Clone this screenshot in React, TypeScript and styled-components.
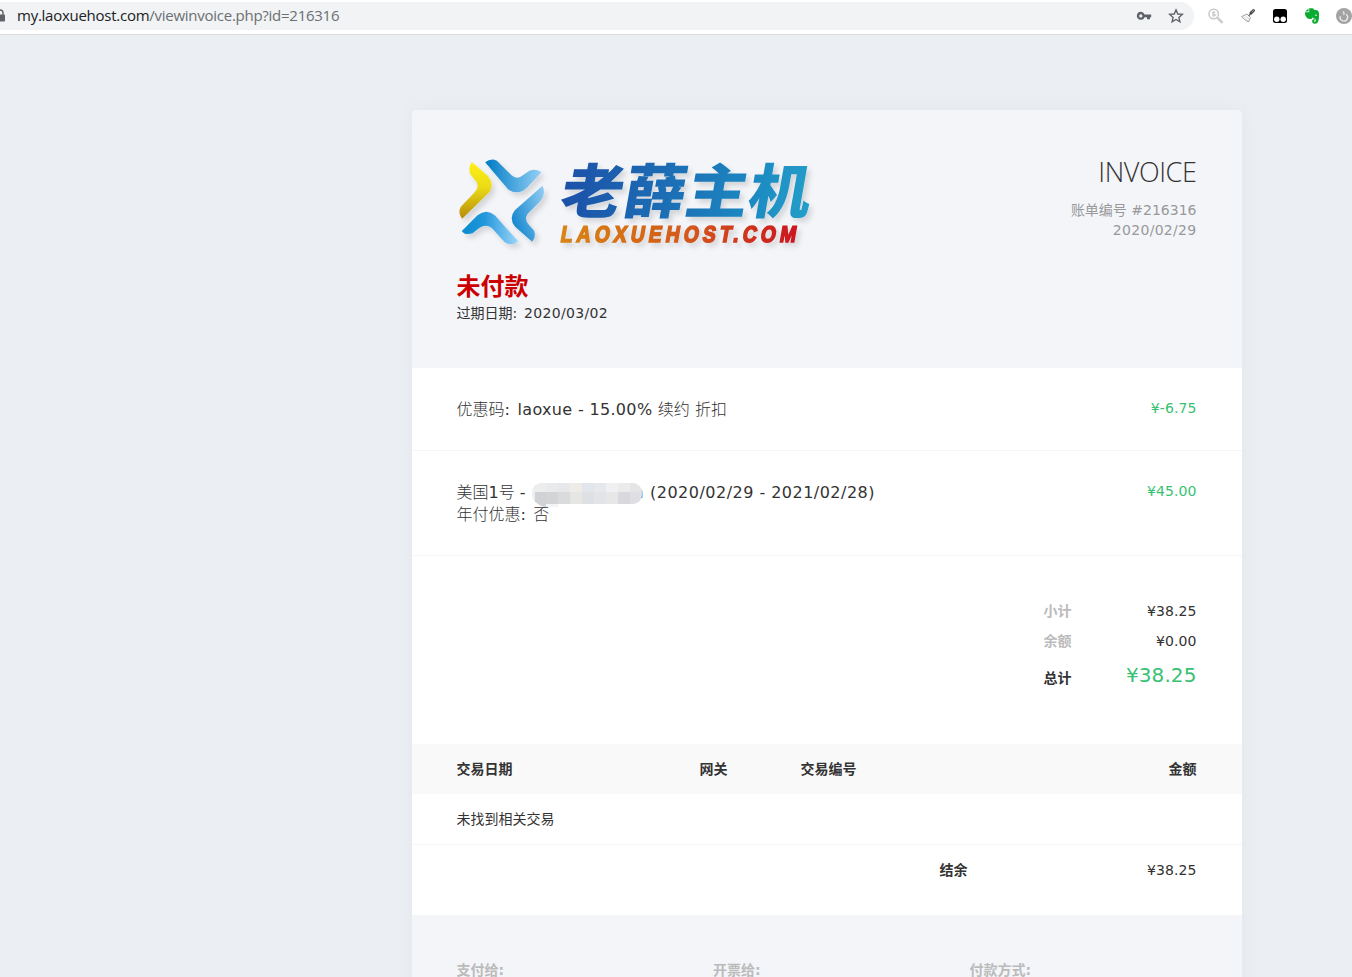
import React from 'react';
import styled, { createGlobalStyle } from 'styled-components';

const Global = createGlobalStyle`
  * { box-sizing: border-box; }
  body { margin: 0; background: #ebeff4; overflow: hidden; }
`;

const Page = styled.div`
  height: 977px;
  overflow: hidden;
  font: 14px/20px 'DejaVu Sans', 'Noto Sans CJK SC', sans-serif;
  color: #333;
`;

const Toolbar = styled.header`
  height: 35px;
  background: #fff;
  border-bottom: 1px solid #d9dcdf;
  display: flex;
  align-items: flex-start;
  padding-top: 2px;
`;

const AddressBar = styled.div`
  width: 1194px;
  height: 28px;
  border-radius: 0 14px 14px 0;
  background: #f1f3f4;
  display: flex;
  align-items: center;
  flex: none;
`;

const Url = styled.div`
  flex: 1;
  margin-left: 11px;
  font: 15px/26px 'Open Sans', sans-serif;
  letter-spacing: -0.26px;
  color: #6b6f73;
  white-space: nowrap;
  padding-bottom: 2px;
`;

const Host = styled.span`
  color: #202124;
`;

const BarIcons = styled.div`
  display: flex;
  gap: 16px;
  padding-right: 10px;
`;

const Extensions = styled.div`
  display: flex;
  gap: 16px;
  margin: 6px 0 0 14px;
  svg { flex: none; }
`;

const Card = styled.main`
  width: 830px;
  height: 1000px;
  margin: 75px 0 0 412px;
  background: #fff;
  border-radius: 5px;
  box-shadow: 0 0 20px rgba(0, 0, 0, 0.04);
  overflow: hidden;
`;

const Head = styled.section`
  height: 258px;
  background: #f3f5f9;
  padding: 45px 45.5px 0 44.5px;
  display: flex;
  justify-content: space-between;
`;

const LogoArt = styled.svg`
  display: block;
  overflow: visible;
`;

const Status = styled.div`
  margin-top: 25px;
  font-size: 24px;
  line-height: 24px;
  font-weight: 700;
  color: #c00;
`;

const Due = styled.div`
  margin-top: 4px;
`;

const Run = styled.span<{ $ls?: number; $light?: boolean; $before?: number }>`
  letter-spacing: ${(p) => p.$ls ?? 0}px;
  margin-left: ${(p) => p.$before ?? 0}px;
  font-weight: ${(p) => (p.$light ? 300 : 'inherit')};
`;

const Meta = styled.div`
  text-align: right;
  color: #999;
`;

const Title = styled.h1`
  margin: -1px 0 11px;
  font: 300 27px/35px 'Open Sans', sans-serif;
  letter-spacing: -0.4px;
  color: #333;
`;

const Item = styled.section<{ $height: number }>`
  height: ${(p) => p.$height}px;
  padding: 30px 45.5px 0 44.5px;
  border-bottom: 1px solid #f5f6f8;
  display: flex;
  justify-content: space-between;
`;

const Description = styled.div`
  padding-top: 1px;
  font-size: 16px;
  line-height: 22px;
  white-space: nowrap;
`;

const Price = styled.div`
  color: #38c172;
  letter-spacing: 0.1px;
`;

const Redacted = styled.span`
  display: inline-block;
  position: relative;
  width: 112px;
  text-align: right;
  margin: 0 6.5px 0 6px;
  color: #536ca0;
`;

const Mosaic = styled.svg`
  position: absolute;
  left: 0;
  top: 0;
`;

const Totals = styled.section`
  height: 188px;
  padding: 45px 45.5px 0 0;
`;

const TotalRow = styled.div<{ $grand?: boolean }>`
  display: grid;
  grid-template-columns: 28px 125px;
  justify-content: end;
  align-items: ${(p) => (p.$grand ? 'end' : 'center')};
  height: ${(p) => (p.$grand ? 27 : 20)}px;
  margin-bottom: ${(p) => (p.$grand ? 0 : 10)}px;
`;

const Label = styled.span<{ $dark?: boolean }>`
  font-weight: 700;
  color: ${(p) => (p.$dark ? '#333' : '#bbb')};
  white-space: nowrap;
`;

const Amount = styled.span<{ $grand?: boolean }>`
  text-align: right;
  font-size: ${(p) => (p.$grand ? 20 : 14)}px;
  line-height: ${(p) => (p.$grand ? 25 : 20)}px;
  letter-spacing: 0.1px;
  color: ${(p) => (p.$grand ? '#38c172' : '#333')};
`;

const Row = styled.div<{ $head?: boolean; $height: number }>`
  display: grid;
  grid-template-columns: 243px 101px 139px 1fr;
  height: ${(p) => p.$height}px;
  padding: 15px 45.5px 0 44.5px;
  background: ${(p) => (p.$head ? '#f9f9f9' : '#fff')};
  font-weight: ${(p) => (p.$head ? 700 : 400)};
  border-bottom: ${(p) => (p.$head ? 0 : 1)}px solid #f5f6f8;
  > :last-child:not(:first-child) { text-align: right; }
`;

const Balance = styled.div`
  display: flex;
  justify-content: space-between;
  height: 70px;
  padding: 15px 45.5px 0 527.5px;
`;

const Foot = styled.section`
  height: 200px;
  background: #f3f5f9;
  padding: 45px 45px 0 44.5px;
  display: grid;
  grid-template-columns: 256.5px 256.5px 1fr;
`;

const Logo = () => (
  <LogoArt width="356" height="95" viewBox="52.5 45 1068 285">
    <defs>
      <linearGradient id="gy" x2="0" y2="1"><stop stopColor="#fff012" /><stop offset=".45" stopColor="#eadb15" /><stop offset="1" stopColor="#b88a0c" /></linearGradient>
      <linearGradient id="gt"><stop stopColor="#007bc4" /><stop offset="1" stopColor="#94d0f6" /></linearGradient>
      <linearGradient id="gr" x1="1" x2="0" y2=".6"><stop stopColor="#94cdf4" /><stop offset="1" stopColor="#1688ce" /></linearGradient>
      <linearGradient id="gb"><stop stopColor="#078bd0" /><stop offset=".4" stopColor="#2397db" /><stop offset="1" stopColor="#9cd5f9" /></linearGradient>
      <linearGradient id="gn" gradientUnits="userSpaceOnUse" x1="365" x2="1110"><stop stopColor="#1d52a8" /><stop offset=".5" stopColor="#1a74b8" /><stop offset="1" stopColor="#229fca" /></linearGradient>
      <linearGradient id="gh" gradientUnits="userSpaceOnUse" x1="0" x2="840"><stop stopColor="#d88514" /><stop offset=".55" stopColor="#d3561b" /><stop offset="1" stopColor="#cb1420" /></linearGradient>
      <filter id="sh" x="-10%" y="-10%" width="125%" height="125%"><feDropShadow dx="10" dy="12" stdDeviation="8" floodColor="#000" floodOpacity=".13" /></filter>
    </defs>
    <g filter="url(#sh)">
      <path fill="url(#gy)" d="M97 66L146 109Q165 135 149 157L68 236Q54 217 64 200L104 158Q119 145 112 127L92 102Q86 82 97 66Z" />
      <path fill="url(#gt)" d="M137 67Q155 53 172 62L216 106Q232 120 248 107L270 92Q292 84 306 97L262 143Q237 167 207 149Z" />
      <path fill="url(#gr)" d="M309 137Q321 162 300 186L264 222Q253 239 268 254L284 272Q290 290 278 305L227 260Q206 236 226 211Z" />
      <path fill="url(#gb)" d="M67 273L114 226Q141 205 166 226L236 304Q215 321 195 306L157 264Q140 251 120 263L99 280Q74 287 67 273Z" />
      <text transform="translate(40 14) skewX(-10) scale(1 .95)" x="352" y="216" textLength="750" lengthAdjust="spacingAndGlyphs" fontFamily="'Noto Sans CJK SC', sans-serif" fontWeight="800" fontSize="186" fill="url(#gn)">老薛主机</text>
      <text transform="translate(361 307) skewX(-10) scale(.85 1)" x="0" y="0" textLength="830" fontFamily="'Liberation Sans', sans-serif" fontWeight="700" fontSize="68" fill="url(#gh)" stroke="url(#gh)" strokeWidth="5">LAOXUEHOST.COM</text>
    </g>
  </LogoArt>
);

const topCells = ['#eceded', '#e9eaeb', '#e7e8ea', '#efebe6', '#e1e6ec', '#e7e8ec', '#eff0f1', '#ebebec', '#e5e5e8'];
const midCells = ['#d1d2d5', '#d3d4d6', '#dadbdd', '#e6e6e2', '#dde1e4', '#e3e4e8', '#e7e7e8', '#d9d9dd', '#dedee3'];

const Redaction = () => (
  <Mosaic width="112" height="29" viewBox="0 0 112 29">
    <defs><clipPath id="mc"><rect x="0" y="1" width="110" height="21" rx="9" /></clipPath></defs>
    <g clipPath="url(#mc)">
      {topCells.map((c, i) => <rect key={c} x={i * 12 + 2} y="0" width="14" height="10" fill={c} />)}
      {midCells.map((c, i) => <rect key={c} x={i * 12 + 2} y="10" width="14" height="12" fill={c} />)}
      <rect width="3" height="23" fill="#eeeeef" />
    </g>
    <path d="M3 19H14V25Q8 25 3 19Z" fill="#d1d2d5" />
    <path d="M14 22H26V25H14Z" fill="#f4f4f4" />
  </Mosaic>
);

export default function App() {
  return (
    <Page>
      <Global />
      <Toolbar>
        <AddressBar>
          <svg width="6" height="14" viewBox="0 0 6 14"><path d="M-3 6V4a3 3 0 0 1 6 0v2" fill="none" stroke="#5f6368" strokeWidth="1.4" /><rect x="-5" y="5.5" width="10" height="7" rx="1" fill="#5f6368" /></svg>
          <Url><Host>my.laoxuehost.com</Host>/viewinvoice.php?id=216316</Url>
          <BarIcons>
            <svg width="16" height="16" viewBox="0 0 16 16"><path fillRule="evenodd" fill="#5f6368" d="M4.8 3.8a4 4 0 1 0 3.8 5.4H11v2.1h3V9.2h1.2V6.5H8.6A4 4 0 0 0 4.8 3.8Zm0 2.5a1.6 1.6 0 1 1 0 3.2 1.6 1.6 0 0 1 0-3.2Z" /></svg>
            <svg width="16" height="16" viewBox="0 0 16 16"><path d="M8 1.9L9.8 6l4.5.4-3.4 3 1 4.400L8 11.5l-3.9 2.3 1-4.400-3.400-3L6.200 6Z" fill="none" stroke="#5f6368" strokeWidth="1.4" /></svg>
          </BarIcons>
        </AddressBar>
        <Extensions>
          <svg width="16" height="16" viewBox="0 0 16 16"><circle cx="5.7" cy="6" r="4.7" fill="none" stroke="#cbcbcb" strokeWidth="1.6" /><path d="M9.5 9.8L14.5 14.8" stroke="#cbcbcb" strokeWidth="2.4" /><path d="M7.4 4.4Q4.2 3.2 4.3 5T7.2 6.8 4 7.8M5.7 3v6.2" fill="none" stroke="#c8c8c8" /></svg>
          <svg width="16" height="16" viewBox="0 0 16 16"><path d="M7 6L10.5 9.5 8.5 14Q4 12 1.5 8.6Z" fill="#f7f7f7" stroke="#999" strokeWidth=".9" /><path d="M3.5 8.4L8 13M5.5 7.6L9 11" stroke="#ddd" /><path d="M8.5 8L12 4.2" stroke="#777" strokeWidth="1.6" /><path d="M11 5L13.5 2.5" stroke="#454545" strokeWidth="3" strokeLinecap="round" /><path d="M11.5 4.3L14 2" stroke="#aaa" /></svg>
          <svg width="16" height="16" viewBox="0 0 16 16"><rect x="1" y="1" width="14" height="14" rx="2.5" fill="#000" /><circle cx="4.8" cy="11.3" r="2.7" fill="#fff" /><circle cx="11.2" cy="11.3" r="2.7" fill="#fff" /></svg>
          <svg width="16" height="16" viewBox="0 0 16 16"><path d="M5.2.3H8Q9.6.3 10 1.7L13.2 2.3Q14.7 2.7 15 5.2 15.400 10 14.2 13.5 13.4 15.800 10.800 15.700 8 15.600 8.100 12.800 8.300 11 10.800 11V12.600Q9.700 12.600 9.900 13.300 10.300 14 11.400 13.700 12.200 12.800 11.400 10.900 9.200 10.700 8.700 9.200 8 11.400 5.400 11 2 10.500 1 6.300.6 4.400 1.500 4.200H5.200Z" fill="#0aab31" /><path d="M4.5.6V3.500H1.300Z" fill="#0aab31" /><path d="M10.900 7.500q1-1.200 2 0" stroke="#fff" strokeWidth=".9" fill="none" /></svg>
          <svg width="16" height="16" viewBox="0 0 16 16"><circle cx="8" cy="8" r="8" fill="#a3a3a3" /><path d="M7.2 3.5Q8.8 5 7.6 6.8M4.300 8.300A3.700 3.700 0 1 0 10 6.300" stroke="#eee" strokeWidth="1.3" fill="none" /></svg>
        </Extensions>
      </Toolbar>

      <Card>
        <Head>
          <div>
            <Logo />
            <Status>未付款</Status>
            <Due>过期日期:<Run $ls={0.33} $before={2}> 2020/03/02</Run></Due>
          </div>
          <Meta>
            <Title>INVOICE</Title>
            <div>账单编号 #216316</div>
            <Run $ls={0.3}>2020/02/29</Run>
          </Meta>
        </Head>

        <Item $height={83}>
          <Description><Run $light>优惠码</Run>:<Run $ls={0.33} $before={2.2}> laoxue - 15.00% </Run><Run $light>续约 折扣</Run></Description>
          <Price>¥-6.75</Price>
        </Item>
        <Item $height={105}>
          <Description>
            <div><Run $light>美国</Run>1<Run $light>号</Run> -<Redacted>n<Redaction /></Redacted><Run $ls={0.48}>(2020/02/29 - 2021/02/28)</Run></div>
            <div><Run $light>年付优惠</Run>:<Run $light $before={2.2}> 否</Run></div>
          </Description>
          <Price>¥45.00</Price>
        </Item>

        <Totals>
          <TotalRow><Label>小计</Label><Amount>¥38.25</Amount></TotalRow>
          <TotalRow><Label>余额</Label><Amount>¥0.00</Amount></TotalRow>
          <TotalRow $grand><Label $dark>总计</Label><Amount $grand>¥38.25</Amount></TotalRow>
        </Totals>

        <Row $head $height={50}><span>交易日期</span><span>网关</span><span>交易编号</span><span>金额</span></Row>
        <Row $height={51}><span>未找到相关交易</span></Row>
        <Balance><Label $dark>结余</Label><Amount>¥38.25</Amount></Balance>
        <Foot><Label>支付给:</Label><Label>开票给:</Label><Label>付款方式:</Label></Foot>
      </Card>
    </Page>
  );
}
